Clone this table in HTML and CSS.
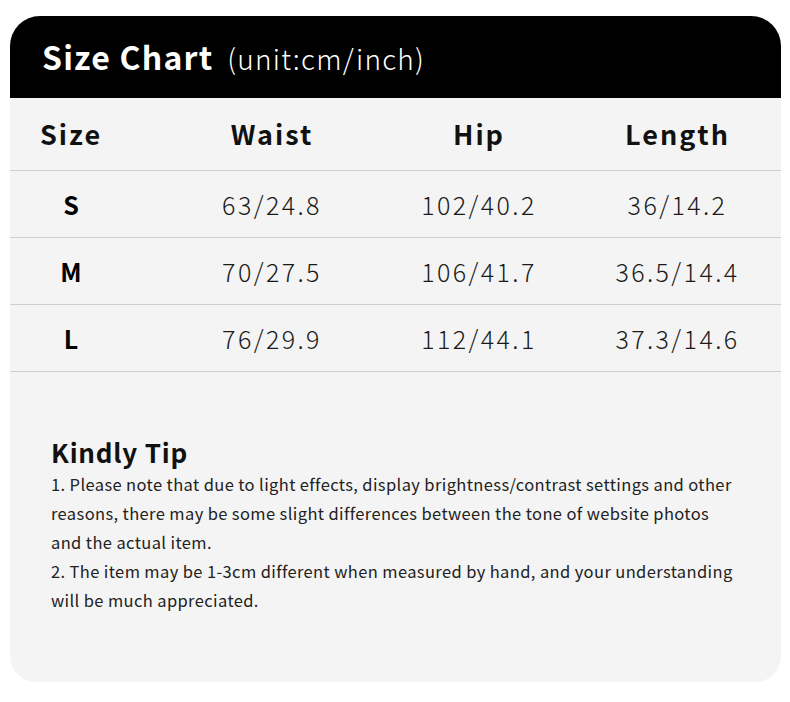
FILE: index.html
```html
<!DOCTYPE html>
<html>
<head>
<meta charset="utf-8">
<link rel="stylesheet" href="styles.css">
</head>
<body>
<div class="card">
  <div class="head">
    <span class="title">Size Chart</span>
    <span class="unit">(unit:cm/inch)</span>
  </div>
  <div class="table">
    <div class="row hrow">
      <div class="c c1">Size</div>
      <div class="c c2">Waist</div>
      <div class="c c3">Hip</div>
      <div class="c c4">Length</div>
    </div>
    <div class="row drow">
      <div class="c c1 sz">S</div>
      <div class="c c2">63/24.8</div>
      <div class="c c3">102/40.2</div>
      <div class="c c4">36/14.2</div>
    </div>
    <div class="row drow">
      <div class="c c1 sz">M</div>
      <div class="c c2">70/27.5</div>
      <div class="c c3">106/41.7</div>
      <div class="c c4">36.5/14.4</div>
    </div>
    <div class="row drow">
      <div class="c c1 sz">L</div>
      <div class="c c2">76/29.9</div>
      <div class="c c3">112/44.1</div>
      <div class="c c4">37.3/14.6</div>
    </div>
  </div>
  <div class="tip">
    <h2 class="tip-title">Kindly Tip</h2>
    <p class="tip-text">1. Please note that due to light effects, display brightness/contrast settings and other reasons, there may be some slight differences between the tone of website photos and the actual item.</p>
    <p class="tip-text">2. The item may be 1-3cm different when measured by hand, and your understanding will be much appreciated.</p>
  </div>
</div>
</body>
</html>
```
FILE: styles.css
```css
html, body {
  margin: 0;
  padding: 0;
  background: #ffffff;
}
body {
  font-family: "Noto Sans CJK SC", "Noto Sans", sans-serif;
  color: #111;
  padding: 16px 9px 0 10px;
}
.card {
  width: 771px;
  height: 666px;
  background: #f4f4f4;
  border-radius: 30px 30px 26px 26px;
  overflow: hidden;
}
.head {
  height: 82px;
  background: #000;
  color: #fff;
  display: flex;
  align-items: center;
  padding-left: 32px;
  box-sizing: border-box;
  gap: 14px;
}
.title {
  font-size: 32px;
  font-weight: 700;
  letter-spacing: 1.2px;
  line-height: 1;
  margin-top: -2px;
}
.unit {
  font-size: 28px;
  font-weight: 300;
  line-height: 1;
  letter-spacing: 1.2px;
  margin-top: 2px;
}
.row {
  display: grid;
  grid-template-columns: 122px 280px 134px 1fr;
  border-bottom: 1px solid #cfcfcf;
  align-items: center;
}
.hrow {
  height: 72px;
}
.drow {
  height: 66px;
}
.c {
  text-align: center;
  line-height: 1;
}
.c4 {
  padding-left: 28px;
}
.hrow .c {
  font-size: 27px;
  font-weight: 700;
  letter-spacing: 2px;
  margin-top: -2px;
}
.drow .c {
  font-size: 25px;
  font-weight: 300;
  color: #1a1a1a;
  letter-spacing: 2.4px;
}
.drow .sz {
  font-size: 25px;
  font-weight: 700;
  color: #000;
  letter-spacing: 0;
}
.tip {
  padding: 63px 40px 0 41px;
}
.tip-title {
  margin: 0 0 1px 0;
  font-size: 26px;
  font-weight: 700;
  letter-spacing: 0.8px;
  line-height: 34px;
}
.tip-text {
  margin: 0;
  font-size: 16.5px;
  font-weight: 400;
  line-height: 29px;
  color: #222;
  letter-spacing: 0.38px;
  width: 690px;
}
```
